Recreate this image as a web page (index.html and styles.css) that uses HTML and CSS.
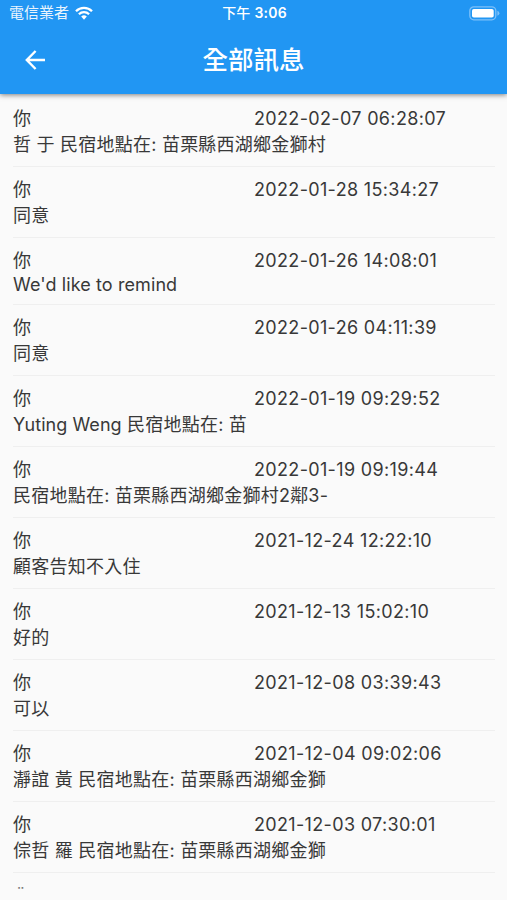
FILE: index.html
```
<!DOCTYPE html>
<html lang="zh-Hant">
<head>
    <meta charset="UTF-8">
    <title>全部訊息</title>
    <link rel="stylesheet" href="styles.css">
</head>
<body>
    <header class="header">
        <div class="status-bar">
            <div class="carrier">
                <span>電信業者</span>
                <svg class="wifi" viewBox="0 0 18 14" width="18" height="14">
                    <path d="M1 5.2a11.3 11.3 0 0 1 16 0M3.9 8.2a7.3 7.3 0 0 1 10.2 0" fill="none" stroke="#fff" stroke-width="2.3"/>
                    <path d="M6.2 10.6a4.1 4.1 0 0 1 5.6 0L9 13.7z" fill="#fff"/>
                </svg>
            </div>
            <div class="clock">下午 <b>3:06</b></div>
            <svg class="battery" viewBox="0 0 31 15" width="31" height="15">
                <rect x=".8" y=".8" width="26" height="13" rx="4" fill="none" stroke="#7cc0f9" stroke-width="1.3"/>
                <rect x="3" y="3" width="21.7" height="8.6" rx="1.8" fill="#fff"/>
                <path d="M28.4 4.8q2 .8 2 2.5t-2 2.5z" fill="#7cc0f9"/>
            </svg>
        </div>
        <div class="nav-bar">
            <svg class="back" viewBox="0 0 20 20" width="20" height="20">
                <path d="M10.6 1L1.8 10l8.8 9M1.8 10H20" fill="none" stroke="#fff" stroke-width="2.4"/>
            </svg>
            <h1>全部訊息</h1>
        </div>
    </header>
    <main class="messages">
        <div class="message">
            <div class="top"><span>你</span><time>2022-02-07 06:28:07</time></div>
            <p>哲 于 民宿地點在: 苗栗縣西湖鄉金獅村</p>
        </div>
        <div class="message">
            <div class="top"><span>你</span><time>2022-01-28 15:34:27</time></div>
            <p>同意</p>
        </div>
        <div class="message latin">
            <div class="top"><span>你</span><time>2022-01-26 14:08:01</time></div>
            <p>We'd like to remind</p>
        </div>
        <div class="message">
            <div class="top"><span>你</span><time>2022-01-26 04:11:39</time></div>
            <p>同意</p>
        </div>
        <div class="message">
            <div class="top"><span>你</span><time>2022-01-19 09:29:52</time></div>
            <p><span class="name">Yuting Weng</span> 民宿地點在: 苗</p>
        </div>
        <div class="message">
            <div class="top"><span>你</span><time>2022-01-19 09:19:44</time></div>
            <p>民宿地點在: 苗栗縣西湖鄉金獅村2鄰3-</p>
        </div>
        <div class="message">
            <div class="top"><span>你</span><time>2021-12-24 12:22:10</time></div>
            <p>顧客告知不入住</p>
        </div>
        <div class="message">
            <div class="top"><span>你</span><time>2021-12-13 15:02:10</time></div>
            <p>好的</p>
        </div>
        <div class="message">
            <div class="top"><span>你</span><time>2021-12-08 03:39:43</time></div>
            <p>可以</p>
        </div>
        <div class="message">
            <div class="top"><span>你</span><time>2021-12-04 09:02:06</time></div>
            <p>瀞誼 黃 民宿地點在: 苗栗縣西湖鄉金獅</p>
        </div>
        <div class="message">
            <div class="top"><span>你</span><time>2021-12-03 07:30:01</time></div>
            <p>倧哲 羅 民宿地點在: 苗栗縣西湖鄉金獅</p>
        </div>
        <div class="more">¨</div>
    </main>
</body>
</html>
```
FILE: styles.css
```
* {
    box-sizing: border-box;
}
body {
    margin: 0;
    height: 900px;
    overflow: hidden;
    background: #fafafa;
    color: #383838;
    font-family: Inter, "Noto Sans CJK TC", sans-serif;
}
.header {
    height: 94px;
    background: #2196f3;
    color: #fff;
    box-shadow: 0 1px 5px rgba(0, 0, 0, 0.5);
}
.status-bar {
    display: grid;
    grid-template-columns: 1fr auto 1fr;
    align-items: center;
    height: 26px;
    padding: 0 7px 0 9px;
    font-size: 14px;
}
.carrier {
    display: flex;
    align-items: center;
    gap: 6px;
    font-size: 15px;
    line-height: 20px;
}
.carrier span {
    opacity: 0.9;
}
.clock {
    font-weight: 500;
    letter-spacing: 0.2px;
    line-height: 20px;
}
.clock b {
    font-weight: 600;
}
.battery {
    justify-self: end;
}
.nav-bar {
    display: grid;
    grid-template-columns: 1fr auto 1fr;
    align-items: center;
    height: 67px;
    padding: 0 25px;
}
h1 {
    margin: 0;
    font-size: 25.5px;
    font-weight: 500;
    line-height: 36px;
}
.messages {
    padding: 2px 12px 0 13px;
}
.message {
    height: 71px;
    padding-top: 10px;
    border-bottom: 1px solid #efefef;
    font-size: 18px;
    letter-spacing: 0.23px;
    line-height: 26px;
    white-space: nowrap;
}
.message .top {
    display: grid;
    grid-template-columns: 1fr 1fr;
    height: 26px;
}
.message time {
    letter-spacing: 0.34px;
}
.message p {
    height: 26px;
    margin: 0;
}
.message .name {
    letter-spacing: 0.05px;
}
.message.latin {
    height: 67px;
}
.message.latin p {
    line-height: 22px;
    letter-spacing: 0.1px;
}
.more {
    padding: 12px 0 0 3px;
    color: #777;
    font-size: 16px;
    line-height: 16px;
}
```
